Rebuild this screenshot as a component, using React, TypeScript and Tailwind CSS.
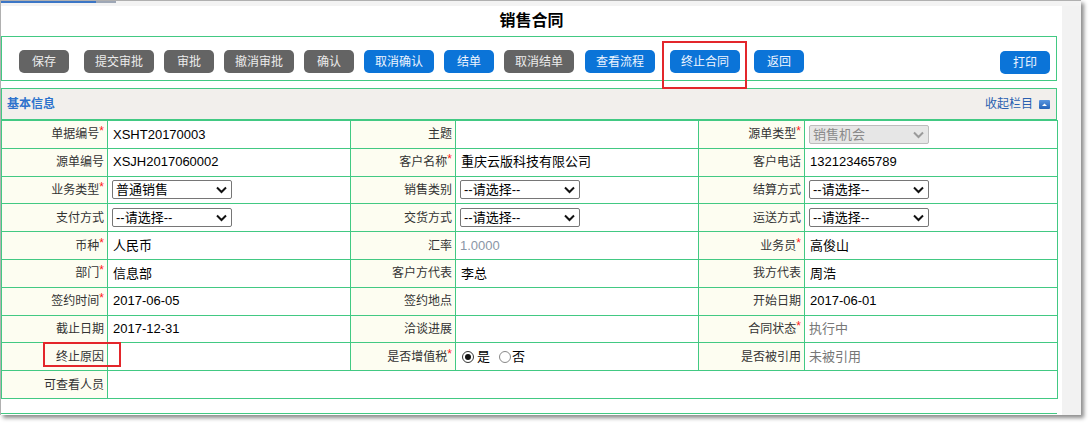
import React from 'react';

const Btn = ({ text, blue = false, w, ml }: { text: string; blue?: boolean; w: string; ml: string }) => (
  <button
    className={`${w} ${ml} h-[23px] rounded-[5px] text-[12px] leading-none ${
      blue ? 'bg-[#0b74d8] text-[#eef4ff]' : 'bg-[#646464] text-[#ececec]'
    }`}
  >
    {text}
  </button>
);

const Sel = ({ value, disabled = false }: { value: string; disabled?: boolean }) => (
  <div
    className={`relative w-[120px] h-[19px] flex items-center pl-[3px] text-[13px] rounded-[2px] border ${
      disabled ? 'bg-[#e6e6e6] border-[#bdbdbd] text-[#8a8a8a]' : 'bg-white border-[#767676] text-black'
    }`}
  >
    {value}
    <svg className="absolute right-[4px] top-[5px]" width="11" height="8" viewBox="0 0 11 8">
      <path d="M1 1.5 L5.5 6 L10 1.5" stroke={disabled ? '#9a9a9a' : '#111'} strokeWidth="2" fill="none" />
    </svg>
  </div>
);

const Radio = ({ checked }: { checked: boolean }) => (
  <span
    className={`inline-flex items-center justify-center w-[12px] h-[12px] rounded-full border bg-white ${
      checked ? 'border-[#333]' : 'border-[#888]'
    }`}
  >
    {checked && <span className="w-[6px] h-[6px] rounded-full bg-[#111]" />}
  </span>
);

type Cell = { label: string; req?: boolean; value?: React.ReactNode };

const Label = ({ label, req }: Cell) => (
  <td className="bg-[#fdfdf1] border border-[#42c983] text-right pr-[3px] text-[12px] text-[#333] whitespace-nowrap">
    {label}
    {req && <span className="text-[#ff2020] relative top-[-3px]">*</span>}
  </td>
);

const Val = ({ children, pl, span }: { children?: React.ReactNode; pl: string; span?: number }) => (
  <td colSpan={span} className={`bg-white border border-[#42c983] ${pl} text-[13px] text-black whitespace-nowrap`}>
    {children}
  </td>
);

const gray = (t: string) => <span className="text-[#777]">{t}</span>;

const rows: Cell[][] = [
  [
    { label: '单据编号', req: true, value: 'XSHT20170003' },
    { label: '主题', value: '' },
    { label: '源单类型', req: true, value: <Sel value="销售机会" disabled /> },
  ],
  [
    { label: '源单编号', value: 'XSJH2017060002' },
    { label: '客户名称', req: true, value: '重庆云版科技有限公司' },
    { label: '客户电话', value: '132123465789' },
  ],
  [
    { label: '业务类型', req: true, value: <Sel value="普通销售" /> },
    { label: '销售类别', value: <Sel value="--请选择--" /> },
    { label: '结算方式', value: <Sel value="--请选择--" /> },
  ],
  [
    { label: '支付方式', value: <Sel value="--请选择--" /> },
    { label: '交货方式', value: <Sel value="--请选择--" /> },
    { label: '运送方式', value: <Sel value="--请选择--" /> },
  ],
  [
    { label: '币种', req: true, value: '人民币' },
    { label: '汇率', value: <span className="text-[#8a96a6]">1.0000</span> },
    { label: '业务员', req: true, value: '高俊山' },
  ],
  [
    { label: '部门', req: true, value: '信息部' },
    { label: '客户方代表', value: '李总' },
    { label: '我方代表', value: '周浩' },
  ],
  [
    { label: '签约时间', req: true, value: '2017-06-05' },
    { label: '签约地点', value: '' },
    { label: '开始日期', value: '2017-06-01' },
  ],
  [
    { label: '截止日期', value: '2017-12-31' },
    { label: '洽谈进展', value: '' },
    { label: '合同状态', req: true, value: gray('执行中') },
  ],
  [
    { label: '终止原因', value: '' },
    {
      label: '是否增值税',
      req: true,
      value: (
        <span className="flex items-center">
          <span className="ml-[2px] flex items-center">
            <Radio checked />
          </span>
          <span className="ml-[3px]">是</span>
          <span className="ml-[9px] flex items-center">
            <Radio checked={false} />
          </span>
          <span className="ml-[1px]">否</span>
        </span>
      ),
    },
    { label: '是否被引用', value: gray('未被引用') },
  ],
];

export default function App() {
  return (
    <div className="w-[1091px] h-[425px] bg-white overflow-hidden relative font-['Liberation_Sans','Noto_Sans_CJK_SC',sans-serif]">
      <div className="w-[1081px] h-[415px] border-l border-t border-[#b0b0b0] bg-[#f2f2f2] shadow-[3px_3px_4px_rgba(0,0,0,0.45)] flex flex-col">
        {/* top band */}
        <div className="h-[5px] bg-[#f3f3f3] flex items-start shrink-0">
          <div className="h-[2px] w-[95px] bg-[#3c76c6]" />
          <div className="h-[2px] w-[20px] bg-[#9ea7b6]" />
        </div>

        <div className="flex flex-1">
          <div className="w-[1061px] bg-white flex flex-col">
            <div className="h-[30px] flex items-center justify-center text-[16px] font-bold text-black">销售合同</div>

            {/* toolbar */}
            <div className="w-[1056px] h-[45px] border border-[#42c983] flex items-start justify-between pt-[13px]">
              <div className="flex">
                <Btn text="保存" w="w-[50px]" ml="ml-[17px]" />
                <Btn text="提交审批" w="w-[70px]" ml="ml-[15px]" />
                <Btn text="审批" w="w-[50px]" ml="ml-[10px]" />
                <Btn text="撤消审批" w="w-[70px]" ml="ml-[10px]" />
                <Btn text="确认" w="w-[50px]" ml="ml-[10px]" />
                <Btn text="取消确认" blue w="w-[70px]" ml="ml-[10px]" />
                <Btn text="结单" blue w="w-[50px]" ml="ml-[10px]" />
                <Btn text="取消结单" w="w-[70px]" ml="ml-[10px]" />
                <Btn text="查看流程" blue w="w-[70px]" ml="ml-[11px]" />
                <Btn text="终止合同" blue w="w-[70px]" ml="ml-[15px]" />
                <Btn text="返回" blue w="w-[50px]" ml="ml-[14px]" />
              </div>
              <div className="mr-[6px] mt-[1px] flex">
                <Btn text="打印" blue w="w-[50px]" ml="ml-0" />
              </div>
            </div>

            {/* section header */}
            <div className="mt-[7px] w-[1056px] h-[32px] border border-[#42c983] bg-[#f2efec] flex items-center justify-between pl-[5px] pr-[6px]">
              <span className="text-[12px] font-bold text-[#2d72cc]">基本信息</span>
              <span className="flex items-center text-[12px] text-[#2a5fb0]">
                收起栏目
                <svg className="ml-[6px]" width="11" height="9" viewBox="0 0 11 9">
                  <defs>
                    <linearGradient id="g" x1="0" y1="0" x2="0" y2="1">
                      <stop offset="0" stopColor="#5b97e0" />
                      <stop offset="1" stopColor="#2563b8" />
                    </linearGradient>
                  </defs>
                  <rect width="11" height="9" rx="1" fill="url(#g)" />
                  <path d="M3 6 L5.5 3.5 L8 6 Z" fill="#fff" />
                </svg>
              </span>
            </div>

            {/* form table */}
            <table className="w-[1056px] table-fixed border-collapse">
              <colgroup>
                <col className="w-[106px]" />
                <col className="w-[243px]" />
                <col className="w-[105px]" />
                <col className="w-[243px]" />
                <col className="w-[106px]" />
                <col className="w-[253px]" />
              </colgroup>
              <tbody>
                {rows.map((r, i) => (
                  <tr key={i} className="h-[27.8px]">
                    {r.map((c, j) => (
                      <React.Fragment key={j}>
                        <Label label={c.label} req={c.req} />
                        <Val pl={typeof c.value === 'string' ? 'pl-[5px]' : 'pl-[4px]'}>{c.value}</Val>
                      </React.Fragment>
                    ))}
                  </tr>
                ))}
                <tr className="h-[27.8px]">
                  <Label label="可查看人员" />
                  <Val pl="pl-[5px]" span={5} />
                </tr>
              </tbody>
            </table>

            <div className="mt-[14px] w-[1056px] border-t border-[#42c983]" />
          </div>
        </div>
      </div>

      {/* annotation boxes */}
      <div className="absolute left-[662px] top-[41px] w-[85px] h-[48px] border-2 border-[#e3262b]" />
      <div className="absolute left-[43px] top-[342px] w-[78px] h-[25px] border-2 border-[#e3262b]" />
    </div>
  );
}
